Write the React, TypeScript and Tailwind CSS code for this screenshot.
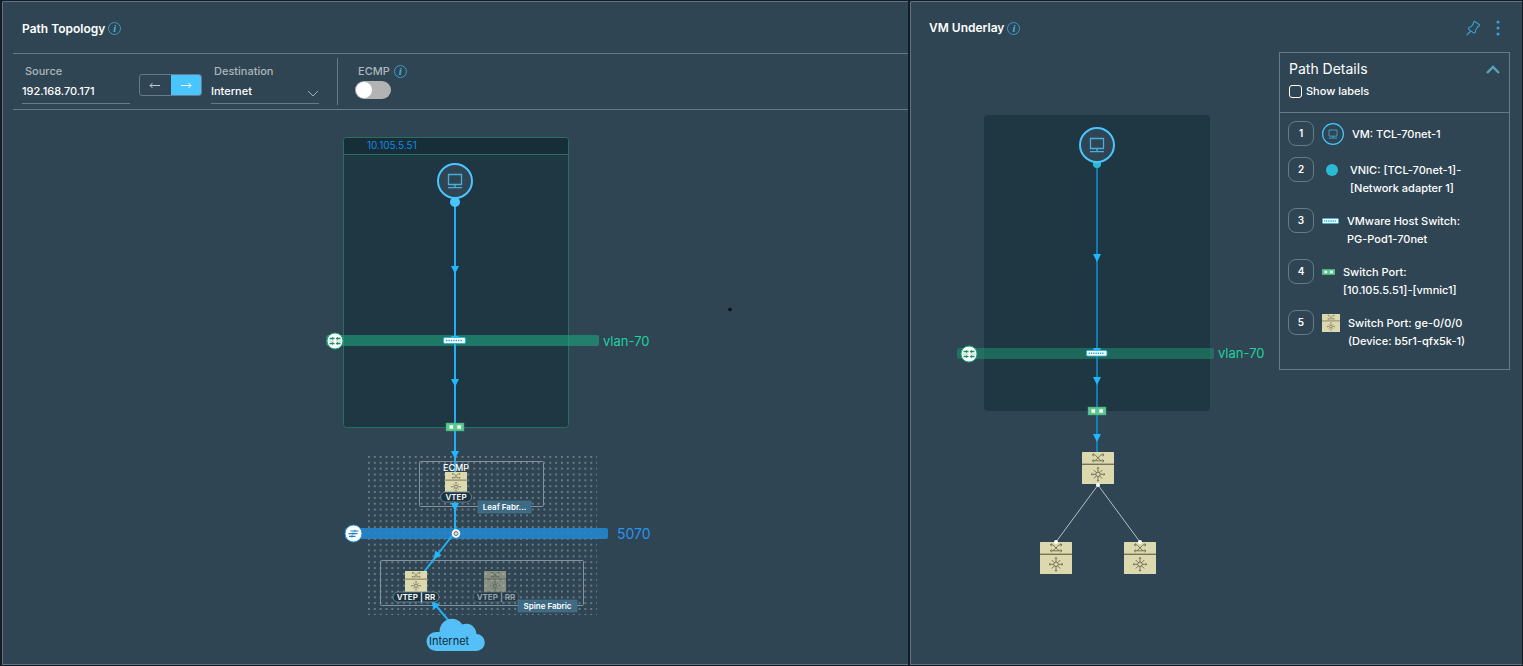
import React from "react";

const InfoIcon: React.FC<{ className?: string }> = ({ className = "" }) => (
	<span
		className={`inline-flex h-[13px] w-[13px] items-center justify-center rounded-full border border-[#3b9cc4] font-['Liberation_Serif',serif] text-[11px] leading-none font-bold italic text-[#49afd9] ${className}`}
	>
		i
	</span>
);

const Monitor: React.FC<{ x: number; y: number; width?: number; color?: string }> = ({
	x,
	y,
	width = 2,
	color = "#49c6ff",
}) => (
	<g transform={`translate(${x} ${y})`}>
		<circle r="17" fill="#2f4553" stroke={color} strokeWidth={width} />
		<path
			d="M-6.5 -6.5h13v10h-13zM0 3.5v3M-7 6.7h14"
			fill="none"
			stroke="#49afd9"
			strokeWidth="1.3"
		/>
	</g>
);

const HostSwitch: React.FC = () => (
	<>
		<rect x="0.5" y="0.5" width="22" height="6" rx="1.5" fill="#ffffff" stroke="#29b6d6" />
		<path d="M3 3.5h17" stroke="#1fa5c9" strokeWidth="1.6" strokeDasharray="1.4 1" />
	</>
);

const SwitchPort: React.FC = () => (
	<>
		<rect width="18" height="8" fill="#5bc98f" stroke="#3f9b72" strokeWidth="0.5" />
		<rect x="3.5" y="2.3" width="3.6" height="3.4" fill="#ffffff" />
		<rect x="11.3" y="2.3" width="3.6" height="3.4" fill="#ffffff" />
	</>
);

// 32x32 leaf/spine device: switch on top, router below
const Device: React.FC = () => (
	<>
		<rect width="32" height="32" rx="0.5" fill="#dcd9ae" />
		<path d="M0 12.3h32" stroke="#77745b" strokeWidth="1.4" />
		<g fill="none" stroke="#6b6952" strokeWidth="0.9">
			<path d="M10.5 2.8h2.5l6 6h3M10.5 8.8h2.5l6-6h3M13 8.8h6" />
			<path d="M20.5 1.5l1.5 1.3l-1.5 1.3M20.5 7.500l1.5 1.3l-1.5 1.3M11.8 1.5l-1.5 1.3l1.5 1.3M11.8 7.5l-1.5 1.3l1.5 1.3" />
			<circle cx="16" cy="22.3" r="2.2" />
			<path d="M16 20.1v-4.6M16 24.5v4.6M13.8 22.3h-4.6M18.2 22.3h4.6M14.4 20.7l-2.600 -2.600M17.6 20.7l2.600 -2.600M14.4 23.9l-2.600 2.600M17.6 23.9l2.600 2.600" />
			<path d="M15 16.500l1-1.200l1 1.200M15 28.100l1 1.200l1-1.200M10.300 21.300l-1.200 1l1.200 1M21.700 21.300l1.200 1l-1.200 1" />
		</g>
	</>
);

const VlanBadge: React.FC<{ x: number; y: number }> = ({ x, y }) => (
	<g transform={`translate(${x} ${y})`}>
		<circle r="8" fill="#ffffff" stroke="#17a673" strokeWidth="1" />
		<path
			d="M-5.5 -2.500h5M1 -2.500h4.5M-5.5 2.500h5M1 2.500h4.5"
			stroke="#1f8a69"
			strokeWidth="1.5"
		/>
		<path d="M-6.5 0h5.5M1 0h5.5" stroke="#7fbfa9" strokeWidth="0.7" />
		<path d="M-2.500 -4v3M-2.500 1v3M2.500 -4v3M2.500 1v3" stroke="#1f8a69" strokeWidth="0.7" />
	</g>
);

const Arrow: React.FC<{ x: number; y: number; rotate?: number }> = ({
	x,
	y,
	rotate = 0,
}) => (
	<path
		d="M-4 -4h8l-4 8z"
		fill="#22b8ff"
		transform={`translate(${x} ${y}) rotate(${rotate})`}
	/>
);

const Vtep: React.FC<{ x: number; y: number; width: number; label: string }> = ({
	x,
	y,
	width,
	label,
}) => (
	<>
		<rect
			x={x - width / 2}
			y={y - 5}
			width={width}
			height="10"
			rx="5"
			fill="#1b3340"
			stroke="#6f8796"
			strokeWidth="0.9"
		/>
		<text
			x={x}
			y={y + 3}
			textAnchor="middle"
			fill="#ffffff"
			className="text-[8px] font-semibold"
		>
			{label}
		</text>
	</>
);

const FabricTag: React.FC<{ x: number; y: number; width: number; label: string }> = ({
	x,
	y,
	width,
	label,
}) => (
	<>
		<rect x={x} y={y} width={width} height="12" fill="#3d6a84" stroke="#4f7a92" strokeWidth="0.6" />
		<text
			x={x + width / 2}
			y={y + 9}
			textAnchor="middle"
			fill="#ffffff"
			className="text-[8px] font-semibold"
		>
			{label}
		</text>
	</>
);

const TopologyDiagram: React.FC = () => (
	<svg width="561" height="554" viewBox="175 110 561 554" className="mx-auto block">
		<defs>
			<pattern id="dots" x="367" y="455" width="5.85" height="5.85" patternUnits="userSpaceOnUse">
				<rect x="1" y="1" width="1.8" height="1.8" fill="#73838c" />
			</pattern>
		</defs>

		{/* host */}
		<rect x="343.5" y="137.5" width="225" height="290" rx="3" fill="#1f3643" stroke="#25705f" />
		<path d="M344 154v-13q0 -3 3 -3h218q3 0 3 3v13z" fill="#172e39" />
		<path d="M344 154.5h224" stroke="#25705f" />
		<text x="367" y="149" fill="#0f8ae0" className="text-[10px]">
			10.105.5.51
		</text>

		{/* fabric */}
		<rect x="367" y="455" width="230" height="160" fill="url(#dots)" />
		<rect x="419.5" y="461.5" width="124" height="45" rx="1" fill="none" stroke="#8193a1" />
		<rect x="380.5" y="560.5" width="203" height="45" rx="1" fill="none" stroke="#8193a1" />

		{/* segments */}
		<rect x="326" y="335" width="273" height="11" rx="2" fill="#1fa17c" fillOpacity="0.62" />
		<rect x="345" y="528" width="263" height="11" rx="2" fill="#2389cf" fillOpacity="0.88" />
		<text x="603" y="346" fill="#1fd1a0" className="text-[13px]">
			vlan-70
		</text>
		<text x="617" y="539" fill="#2a93f0" className="text-[14px]">
			5070
		</text>

		{/* path */}
		<path
			d="M455 200V532L424 572M431 600L449 621"
			fill="none"
			stroke="#22b0f5"
			strokeWidth="2"
		/>
		<Arrow x={455} y={270} />
		<Arrow x={455} y={340} />
		<Arrow x={455} y={383} />
		<Arrow x={455} y={455} />
		<Arrow x={455} y={507} />
		<Arrow x={436} y={556} rotate={38} />
		<Arrow x={434} y={604} rotate={-220} />

		<Monitor x={455} y={181} />
		<circle cx="455" cy="202" r="5" fill="#49c6ff" />
		<VlanBadge x={335} y={341} />
		<g transform="translate(443 337)">
			<HostSwitch />
		</g>
		<g transform="translate(446 423)">
			<SwitchPort />
		</g>

		<g transform="translate(445 472) scale(0.69 0.66)">
			<Device />
		</g>
		<text x="456" y="471" textAnchor="middle" fill="#ffffff" className="text-[9px] font-medium">
			ECMP
		</text>
		<Vtep x={456} y={497} width={31} label="VTEP" />
		<FabricTag x={478} y={501} width={53} label="Leaf Fabr..." />

		<circle cx="353.5" cy="533.5" r="8.5" fill="#ffffff" stroke="#1d8ae0" strokeWidth="1" />
		<path
			d="M350.5 531h8M348.5 533.7h9M349 536.4h6.5"
			stroke="#2080cc"
			strokeWidth="1.2"
		/>
		<path d="M355 529.8v2.4M353 532.5v2.4M352 535.2v2.4" stroke="#2080cc" />
		<circle cx="456" cy="533.5" r="4.2" fill="#ffffff" />
		<circle cx="456" cy="533.5" r="2" fill="#d9dcde" stroke="#6b6f72" strokeWidth="1" />

		<g transform="translate(405 571) scale(0.69 0.66)">
			<Device />
		</g>
		<Vtep x={416} y={597} width={46} label="VTEP | RR" />
		<g opacity="0.5">
			<g transform="translate(484 571) scale(0.69 0.66)">
				<Device />
			</g>
			<Vtep x={496} y={597} width={46} label="VTEP | RR" />
		</g>
		<FabricTag x={518} y={600} width={59} label="Spine Fabric" />

		<path
			d="M436 651a9.5 9.5 0 0 1 0 -19h3.500a12.500 12.500 0 0 1 23 -7.500a10 10 0 0 1 13.800 9.500a8.500 8.500 0 0 1 0 17z"
			fill="#55c0f7"
		/>
		<text x="429" y="645" fill="#0c2a3a" className="text-[11px]">
			Internet
		</text>

		<circle cx="730" cy="309.5" r="1.8" fill="#0b1116" />
	</svg>
);

const UnderlayDiagram: React.FC = () => (
	<svg width="364" height="612" viewBox="915 52 364 612" className="block">
		<rect x="984" y="115" width="226" height="296" rx="4" fill="#1f3643" />
		<rect x="957" y="348" width="257" height="11" rx="2" fill="#1d9070" fillOpacity="0.55" />
		<text x="1218" y="358" fill="#1fd1a0" className="text-[13px]">
			vlan-70
		</text>

		<path d="M1097 164V453" stroke="#0d8fd1" strokeWidth="1.6" />
		<Arrow x={1097} y={258} />
		<Arrow x={1097} y={352} />
		<Arrow x={1097} y={381} />
		<Arrow x={1097} y={438} />

		<circle cx="1097" cy="164" r="4" fill="#2bbcd4" />
		<Monitor x={1097} y={145} />
		<VlanBadge x={969} y={354} />
		<g transform="translate(1086 350) scale(0.93)">
			<HostSwitch />
		</g>
		<g transform="translate(1088 407)">
			<SwitchPort />
		</g>

		<path d="M1056 542L1098 485L1140 542" fill="none" stroke="#b5bfc4" />
		<g transform="translate(1082 452)">
			<Device />
		</g>
		<g transform="translate(1040 542)">
			<Device />
		</g>
		<g transform="translate(1124 542)">
			<Device />
		</g>
		<g fill="#ffffff">
			<circle cx="1098" cy="485" r="2" />
			<circle cx="1056" cy="542" r="2" />
			<circle cx="1140" cy="542" r="2" />
		</g>
	</svg>
);

const pathSteps = [
	{
		id: 1,
		lines: ["VM: TCL-70net-1"],
		icon: (
			<svg width="22" height="22" viewBox="-18 -18 36 36">
				<Monitor x={0} y={0} />
			</svg>
		),
	},
	{
		id: 2,
		lines: ["VNIC: [TCL-70net-1]-", "[Network adapter 1]"],
		icon: (
			<svg width="20" height="12" viewBox="0 0 20 12">
				<circle cx="10" cy="6" r="6" fill="#2bbcd4" />
			</svg>
		),
	},
	{
		id: 3,
		lines: ["VMware Host Switch:", "PG-Pod1-70net"],
		icon: (
			<svg width="17" height="6" viewBox="0 0 23 7" preserveAspectRatio="none">
				<HostSwitch />
			</svg>
		),
	},
	{
		id: 4,
		lines: ["Switch Port:", "[10.105.5.51]-[vmnic1]"],
		icon: (
			<svg width="13" height="6" viewBox="0 0 18 8">
				<SwitchPort />
			</svg>
		),
	},
	{
		id: 5,
		lines: ["Switch Port: ge-0/0/0", "(Device: b5r1-qfx5k-1)"],
		icon: (
			<svg width="18" height="18" viewBox="0 0 32 32">
				<Device />
			</svg>
		),
	},
];

const PathDetails: React.FC = () => (
	<aside className="mr-3 w-[231px] shrink-0 self-start border border-[#647b8c]">
		<div className="flex justify-between border-b border-[#647b8c] px-[9px] pt-2 pb-3">
			<div>
				<h2 className="text-[14px] leading-4 text-white">Path Details</h2>
				<label className="mt-[5px] flex items-center gap-1 text-[11px] leading-[18px] font-medium text-white">
					<input
						type="checkbox"
						className="h-[13px] w-[13px] appearance-none rounded-[3px] border border-white checked:bg-[#49afd9]"
					/>
					Show labels
				</label>
			</div>
			<button aria-label="Collapse" className="self-start pt-1">
				<svg width="14" height="10" viewBox="0 0 14 10">
					<path d="M1 8l6-6l6 6" fill="none" stroke="#58a5b5" strokeWidth="2.4" />
				</svg>
			</button>
		</div>
		<ol className="flex flex-col gap-[11px] px-2 pt-2 pb-[19px]">
			{pathSteps.map((step) => (
				<li key={step.id} className="flex items-start gap-2">
					<span className="flex h-[25px] w-[26px] shrink-0 items-center justify-center rounded-[8px] border border-[#647b8c] text-[10px] font-semibold text-white">
						{step.id}
					</span>
					<span className="flex h-[25px] items-center">{step.icon}</span>
					<p className="pt-1 text-[11px] leading-[18px] font-medium text-white">
						{step.lines.map((line) => (
							<span key={line} className="block">
								{line}
							</span>
						))}
					</p>
				</li>
			))}
		</ol>
	</aside>
);

const Toolbar: React.FC = () => (
	<div className="ml-[10px] flex h-[57px] border-y border-[#647b8c] pl-[9px] text-[11px] font-medium">
		<div className="w-[108px] pt-2">
			<label htmlFor="source" className="block pl-[3px] leading-[18px] text-[#adb5ba]">
				Source
			</label>
			<input
				id="source"
				type="text"
				defaultValue="192.168.70.171"
				className="block h-6 w-full border-b border-[#647b8c] bg-transparent pb-px text-white outline-none"
			/>
		</div>
		<div className="mt-5 ml-[9px] flex h-[22px] w-[63px] overflow-hidden rounded-[3px] border border-[#647b8c]">
			<button aria-label="Reverse path" className="flex flex-1 items-center justify-center">
				<svg width="12" height="8" viewBox="0 0 12 8">
					<path d="M11 4.5H1M3.500 2L1 4.500l2.500 2.500" fill="none" stroke="#c3ccd1" />
				</svg>
			</button>
			<button
				aria-label="Forward path"
				className="flex flex-1 items-center justify-center bg-[#49c6ff]"
			>
				<svg width="12" height="8" viewBox="0 0 12 8">
					<path d="M1 4.5h10M8.500 2l2.500 2.500l-2.500 2.500" fill="none" stroke="#ffffff" />
				</svg>
			</button>
		</div>
		<div className="relative ml-[9px] w-[108px] pt-2">
			<label htmlFor="destination" className="block pl-[3px] leading-[18px] text-[#adb5ba]">
				Destination
			</label>
			<select
				id="destination"
				className="block h-6 w-full appearance-none border-b border-[#647b8c] bg-transparent text-white outline-none"
			>
				<option>Internet</option>
			</select>
			<svg
				width="12"
				height="7"
				viewBox="0 0 12 7"
				className="pointer-events-none absolute right-0 bottom-3"
			>
				<path d="M1 1l5 5l5-5" fill="none" stroke="#9fb0ba" />
			</svg>
		</div>
		<div className="my-1 ml-[18px] w-px bg-[#647b8c]" />
		<div className="ml-[17px] pt-2">
			<label htmlFor="ecmp" className="flex items-center gap-1 pl-[3px] leading-[18px] text-[#adb5ba]">
				ECMP
				<InfoIcon />
			</label>
			<input
				id="ecmp"
				type="checkbox"
				role="switch"
				className="mt-px flex h-[18px] w-9 appearance-none items-center rounded-full bg-[#b3b3b3] pl-px before:h-4 before:w-4 before:rounded-full before:bg-white"
			/>
		</div>
	</div>
);

const App: React.FC = () => {
	return (
		<div className="grid min-h-screen grid-cols-[906fr_612fr] gap-[2px] bg-[#151c24] py-px pr-px pl-[2px] font-[Inter,sans-serif]">
			<section className="rounded-tl-[2px] border border-r-0 border-[#5f7384] bg-[#2f4553]">
				<header className="flex h-[51px] items-center gap-[3px] pt-[2px] pl-[19px]">
					<h1 className="text-[12px] font-semibold text-white">Path Topology</h1>
					<InfoIcon />
				</header>
				<Toolbar />
				<TopologyDiagram />
			</section>

			<section className="rounded-tl-[2px] border border-r-0 border-[#5f7384] bg-[#2f4553]">
				<header className="flex h-[50px] items-center gap-[3px] pt-[2px] pr-[22px] pl-[18px]">
					<h1 className="text-[12px] font-semibold text-white">VM Underlay</h1>
					<InfoIcon />
					<button aria-label="Pin" className="mr-3 ml-auto">
						<svg width="15" height="16" viewBox="0 0 15 16">
							<path
								d="M8.500 1.200l5 3.600l-0.600 1.600l-1 0.200l-2.200 3.200l-0.400 2.600l-1.400 0.700l-5.400 -4l0.300 -1.500l2.600 -1.100l2.200 -3.100l-0.200 -1zM4.800 11l-4 4"
								fill="none"
								stroke="#3b9fd0"
								strokeWidth="1.1"
								strokeLinejoin="round"
							/>
						</svg>
					</button>
					<button aria-label="More actions">
						<svg width="4" height="16" viewBox="0 0 4 16" fill="#3b9fd0">
							<circle cx="2" cy="2" r="1.6" />
							<circle cx="2" cy="8" r="1.6" />
							<circle cx="2" cy="14" r="1.6" />
						</svg>
					</button>
				</header>
				<div className="flex">
					<div className="flex flex-1 justify-center pl-1">
						<UnderlayDiagram />
					</div>
					<PathDetails />
				</div>
			</section>
		</div>
	);
};

export default App;
